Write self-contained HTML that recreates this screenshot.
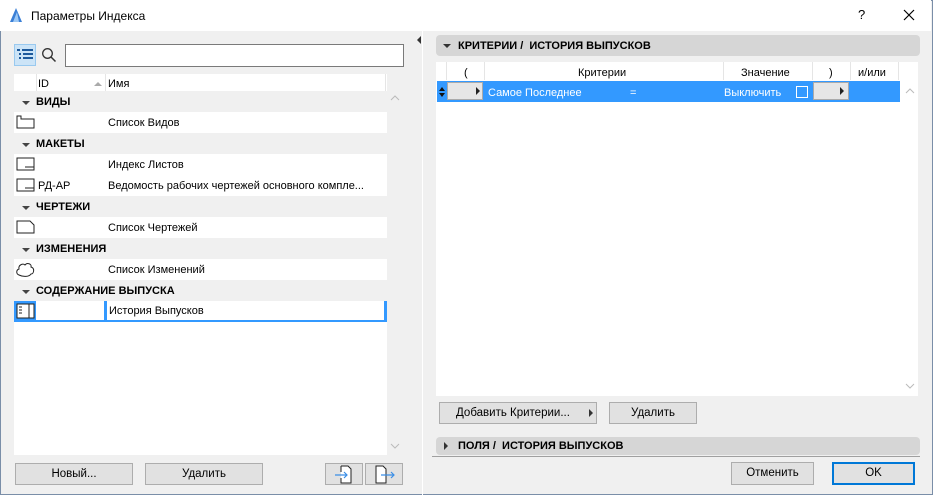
<!DOCTYPE html>
<html><head><meta charset="utf-8"><style>
*{box-sizing:border-box;margin:0;padding:0}
body{width:933px;height:495px;overflow:hidden;font-family:"Liberation Sans",sans-serif;font-size:11px;color:#000;background:#f0f0f0;position:relative}
.abs{position:absolute}
.win{position:absolute;left:0;top:0;width:933px;height:495px;border:1px solid #7a8ea8;background:#f0f0f0}
.title{position:absolute;left:0;top:0;width:931px;height:31px;background:#fff}
.btn{position:absolute;background:#e1e1e1;border:1px solid #adadad;text-align:center;line-height:20px;font-size:11.5px}
.row{position:absolute;left:14px;width:373px;height:21px;line-height:23px;background:#fff}
.cat{position:absolute;left:14px;width:373px;height:21px;line-height:23px;background:#f0f0f0;font-weight:bold;padding-left:22px;font-size:11px}
.cat:before{content:"";position:absolute;left:8px;top:10px;border-left:4px solid transparent;border-right:4px solid transparent;border-top:4px solid #444}
.name{position:absolute;left:94px}
.hdr{position:absolute;background:#d6d6d6;border-radius:4px;font-weight:bold;padding-left:22px;font-size:11px}
</style></head><body>
<div class="win"></div>
<div class="title"></div>
<svg class="abs" style="left:9px;top:7px" width="14" height="16"><path d="M1 15 L7 1 L13 15Z" fill="#3a7fd6"/><path d="M4 15 L8 5 L10 15Z" fill="#9cc8f5"/></svg>
<div class="abs" style="left:31px;top:9px;font-size:12px">Параметры Индекса</div>
<div class="abs" style="left:858px;top:7px;font-size:13px">?</div>
<svg class="abs" style="left:903px;top:9px" width="12" height="12"><path d="M1 1L11 11M11 1L1 11" stroke="#000" stroke-width="1.2"/></svg>

<div class="abs" style="left:14px;top:44px;width:22px;height:22px;background:#cce4f7;border:1px solid #99c9ef"></div>
<svg class="abs" style="left:17px;top:48px" width="16" height="14"><g fill="#1e5a9c"><rect x="0" y="1" width="3" height="2"/><rect x="5" y="1" width="11" height="2"/><rect x="2" y="5" width="2" height="2"/><rect x="6" y="5" width="10" height="2"/><rect x="2" y="9" width="2" height="2"/><rect x="6" y="9" width="10" height="2"/></g></svg>
<svg class="abs" style="left:41px;top:47px" width="16" height="16"><circle cx="6.5" cy="6.5" r="4.8" stroke="#333" fill="none" stroke-width="1.3"/><path d="M10 10L14.5 14.5" stroke="#333" stroke-width="1.5"/></svg>
<div class="abs" style="left:65px;top:44px;width:339px;height:23px;background:#fff;border:1px solid #7a7a7a"></div>

<div class="abs" style="left:14px;top:74px;width:373px;height:381px;background:#fff"></div>
<div class="abs" style="left:36px;top:74px;width:1px;height:17px;background:#e5e5e5"></div>
<div class="abs" style="left:105px;top:74px;width:1px;height:17px;background:#e5e5e5"></div>
<div class="abs" style="left:385px;top:74px;width:1px;height:17px;background:#e5e5e5"></div>
<div class="abs" style="left:38px;top:78px">ID</div>
<div class="abs" style="left:94px;top:82px;border-left:4px solid transparent;border-right:4px solid transparent;border-bottom:4px solid #aaa"></div>
<div class="abs" style="left:108px;top:78px">Имя</div>

<div class="cat" style="top:91px">ВИДЫ</div>
<div class="row" style="top:112px"><span class="name">Список Видов</span></div>
<div class="cat" style="top:133px">МАКЕТЫ</div>
<div class="row" style="top:154px"><span class="name">Индекс Листов</span></div>
<div class="row" style="top:175px"><span style="position:absolute;left:24px">РД-АР</span><span class="name">Ведомость рабочих чертежей основного компле...</span></div>
<div class="cat" style="top:196px">ЧЕРТЕЖИ</div>
<div class="row" style="top:217px"><span class="name">Список Чертежей</span></div>
<div class="cat" style="top:238px">ИЗМЕНЕНИЯ</div>
<div class="row" style="top:259px"><span class="name">Список Изменений</span></div>
<div class="cat" style="top:280px">СОДЕРЖАНИЕ ВЫПУСКА</div>
<div class="row" style="top:301px;border-bottom:2px solid #3399ff;border-right:3px solid #3399ff"><span class="name" style="border-left:3px solid #3399ff;padding-left:2px;left:90px;height:19px;line-height:21px">История Выпусков</span></div>
<div class="abs" style="left:14px;top:301px;width:22px;height:21px;background:#3399ff"></div>

<svg class="abs" style="left:16px;top:115px" width="20" height="14"><path d="M1 1H5V4H18V13H1Z" fill="none" stroke="#222"/></svg>
<svg class="abs" style="left:16px;top:157px" width="20" height="14"><path d="M1 1H18V13H1Z M9 10H18" fill="none" stroke="#222"/></svg>
<svg class="abs" style="left:16px;top:178px" width="20" height="14"><path d="M1 1H18V13H1Z M9 10H18" fill="none" stroke="#222"/></svg>
<svg class="abs" style="left:16px;top:220px" width="20" height="14"><path d="M1 1H14L18 5V13H1Z" fill="none" stroke="#222"/></svg>
<svg class="abs" style="left:16px;top:262px" width="20" height="16"><path d="M3 13C0 12 0 8 3 7C2 3 7 1 9 3C11 0 16 2 15 5C19 6 18 12 15 12C13 15 7 15 3 13Z" fill="none" stroke="#222"/></svg>
<svg class="abs" style="left:16px;top:303px" width="20" height="16"><rect x="1" y="1" width="17" height="14" fill="#fff" stroke="#222"/><path d="M13 1V15M3 4H6M3 7H6M3 10H6" stroke="#222"/></svg>

<svg class="abs" style="left:390px;top:95px" width="10" height="6"><path d="M1 5L5 1L9 5" stroke="#bbb" fill="none"/></svg>
<svg class="abs" style="left:390px;top:443px" width="10" height="6"><path d="M1 1L5 5L9 1" stroke="#bbb" fill="none"/></svg>

<div class="btn" style="left:15px;top:463px;width:118px;height:22px">Новый...</div>
<div class="btn" style="left:145px;top:463px;width:118px;height:22px">Удалить</div>
<div class="btn" style="left:325px;top:463px;width:38px;height:22px"></div>
<div class="btn" style="left:365px;top:463px;width:38px;height:22px"></div>
<svg class="abs" style="left:334px;top:465px" width="22" height="19"><path d="M7 1H14L17 4V18H7V13M7 1V7" fill="#fff" stroke="#222"/><path d="M1 10H13M10 7L13 10L10 13" stroke="#3a8ee6" fill="none" stroke-width="1.2"/></svg>
<svg class="abs" style="left:374px;top:465px" width="22" height="19"><path d="M2 1H9L12 4V18H2Z" fill="#fff" stroke="#222"/><path d="M7 10H20M17 7L20 10L17 13" stroke="#3a8ee6" fill="none" stroke-width="1.2"/></svg>

<svg class="abs" style="left:416px;top:36px" width="6" height="8"><path d="M5 0V8L1 4Z" fill="#333"/></svg>
<div class="abs" style="left:422px;top:31px;width:1px;height:464px;background:#fff"></div>

<div class="hdr" style="left:436px;top:35px;width:484px;height:21px;line-height:22px">КРИТЕРИИ / &nbsp;ИСТОРИЯ ВЫПУСКОВ</div>
<div class="abs" style="left:443px;top:44px;border-left:4px solid transparent;border-right:4px solid transparent;border-top:4px solid #333"></div>
<div class="abs" style="left:436px;top:62px;width:482px;height:334px;background:#fff"></div>
<div class="abs" style="left:446px;top:62px;width:1px;height:18px;background:#e5e5e5"></div>
<div class="abs" style="left:484px;top:62px;width:1px;height:18px;background:#e5e5e5"></div>
<div class="abs" style="left:723px;top:62px;width:1px;height:18px;background:#e5e5e5"></div>
<div class="abs" style="left:812px;top:62px;width:1px;height:18px;background:#e5e5e5"></div>
<div class="abs" style="left:850px;top:62px;width:1px;height:18px;background:#e5e5e5"></div>
<div class="abs" style="left:898px;top:62px;width:1px;height:18px;background:#e5e5e5"></div>
<div class="abs" style="left:464px;top:67px">(</div>
<div class="abs" style="left:578px;top:67px">Критерии</div>
<div class="abs" style="left:741px;top:67px">Значение</div>
<div class="abs" style="left:829px;top:67px">)</div>
<div class="abs" style="left:858px;top:67px">и/или</div>
<div class="abs" style="left:437px;top:81px;width:463px;height:21px;background:#3399ff"></div>
<svg class="abs" style="left:439px;top:86px" width="6" height="12"><path d="M0 5L3 1L6 5ZM0 7L3 11L6 7Z" fill="#111"/></svg>
<div class="abs" style="left:447px;top:82px;width:36px;height:18px;background:#e6e6e6;border:1px solid #aaa"></div>
<div class="abs" style="left:476px;top:87px;border-top:4px solid transparent;border-bottom:4px solid transparent;border-left:4px solid #222"></div>
<div class="abs" style="left:488px;top:87px;color:#fff">Самое Последнее</div>
<div class="abs" style="left:630px;top:87px;color:#fff">=</div>
<div class="abs" style="left:724px;top:87px;color:#fff">Выключить</div>
<div class="abs" style="left:796px;top:86px;width:12px;height:12px;border:1px solid #fff"></div>
<div class="abs" style="left:813px;top:82px;width:36px;height:18px;background:#e6e6e6;border:1px solid #aaa"></div>
<div class="abs" style="left:840px;top:87px;border-top:4px solid transparent;border-bottom:4px solid transparent;border-left:4px solid #222"></div>
<svg class="abs" style="left:905px;top:88px" width="10" height="6"><path d="M1 5L5 1L9 5" stroke="#bbb" fill="none"/></svg>
<svg class="abs" style="left:905px;top:383px" width="10" height="6"><path d="M1 1L5 5L9 1" stroke="#bbb" fill="none"/></svg>

<div class="btn" style="left:439px;top:402px;width:158px;height:22px;text-align:left;padding-left:16px">Добавить Критерии...</div>
<div class="abs" style="left:589px;top:409px;border-top:4px solid transparent;border-bottom:4px solid transparent;border-left:4px solid #333"></div>
<div class="btn" style="left:609px;top:402px;width:88px;height:22px">Удалить</div>

<div class="hdr" style="left:436px;top:437px;width:484px;height:18px;line-height:19px">ПОЛЯ / &nbsp;ИСТОРИЯ ВЫПУСКОВ</div>
<div class="abs" style="left:444px;top:442px;border-top:4px solid transparent;border-bottom:4px solid transparent;border-left:4px solid #333"></div>
<div class="abs" style="left:432px;top:456px;width:488px;height:1px;background:#a0a0a0"></div>
<div class="btn" style="left:731px;top:462px;width:83px;height:23px">Отменить</div>
<div class="btn" style="left:832px;top:462px;width:83px;height:23px;border:2px solid #0078d7;line-height:19px">OK</div>
</body></html>
